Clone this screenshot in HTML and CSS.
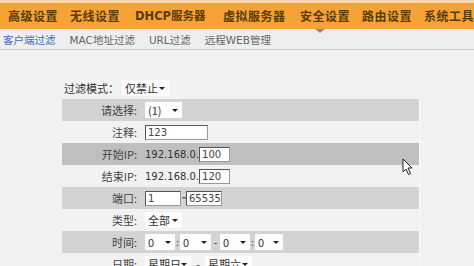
FILE: index.html
```html
<!DOCTYPE html>
<html lang="zh">
<head>
<meta charset="utf-8">
<link rel="stylesheet" href="styles.css">
</head>
<body>
<div class="topline"></div>
<nav class="menu">
  <span class="mi m1">高级设置</span>
  <span class="mi m2">无线设置</span>
  <span class="mi m3">DHCP服务器</span>
  <span class="mi m4">虚拟服务器</span>
  <span class="mi m5 active">安全设置</span>
  <span class="mi m6">路由设置</span>
  <span class="mi m7">系统工具</span>
</nav>
<div class="subbar">
  <span class="si cur">客户端过滤</span>
  <span class="si">MAC地址过滤</span>
  <span class="si">URL过滤</span>
  <span class="si">远程WEB管理</span>
</div>
<main class="content">
  <div class="mode">
    <span class="mode-label">过滤模式：</span>
    <span class="sel w47">仅禁止<i class="arr"></i></span>
  </div>
  <div class="table">
    <div class="row g1"><span class="lab">请选择:</span><span class="val"><span class="sel w37">(1)<i class="arr"></i></span></span></div>
    <div class="row"><span class="lab">注释:</span><span class="val"><span class="inp w63">123</span></span></div>
    <div class="row g2"><span class="lab">开始IP:</span><span class="val">192.168.0.<span class="inp w31">100</span></span></div>
    <div class="row"><span class="lab">结束IP:</span><span class="val">192.168.0.<span class="inp w31">120</span></span></div>
    <div class="row g1"><span class="lab">端口:</span><span class="val"><span class="inp w36">1</span><span class="sep">~</span><span class="inp w36">65535</span></span></div>
    <div class="row"><span class="lab">类型:</span><span class="val"><span class="sel w37">全部<i class="arr"></i></span></span></div>
    <div class="row g1"><span class="lab">时间:</span><span class="val"><span class="sel w30">0<i class="arr"></i></span><span class="sep">:</span><span class="sel w31">0<i class="arr"></i></span><span class="sep dash">-</span><span class="sel w30">0<i class="arr"></i></span><span class="sep">:</span><span class="sel w28">0<i class="arr"></i></span></span></div>
    <div class="row"><span class="lab">日期:</span><span class="val"><span class="sel w46">星期日<i class="arr"></i></span><span class="sep dash2">-</span><span class="sel w47">星期六<i class="arr"></i></span></span></div>
  </div>
</main>
<svg class="cursor" width="12" height="18" viewBox="0 0 12 18"><path d="M1 1 L1 14 L4 11 L6.5 16.5 L8.5 15.5 L6 10 L10 10 Z" fill="#fff" stroke="#222" stroke-width="1"/></svg>
</body>
</html>
```
FILE: styles.css
```css
html, body {
  margin: 0;
  padding: 0;
}
body {
  width: 474px;
  height: 266px;
  overflow: hidden;
  background: #f2f2f2;
  font-family: "Noto Sans CJK SC", "DejaVu Sans", sans-serif;
  color: #333;
  position: relative;
}
.topline {
  height: 3px;
  background: #fbd9a8;
}
.menu {
  height: 26px;
  background: #f7a237;
  white-space: nowrap;
  font-size: 12px;
  font-weight: bold;
  color: #5a3c08;
  position: relative;
}
.mi { position: absolute; top: 3px; line-height: 20px; letter-spacing: 0.5px; }
.m1 { left: 8px; }
.m2 { left: 70px; }
.m3 { left: 135px; font-family: "DejaVu Sans", "Noto Sans CJK SC", sans-serif; font-size: 11.5px; letter-spacing: 0; }
.m4 { left: 223px; }
.m5 { left: 300px; }
.m6 { left: 362px; }
.m7 { left: 424px; }
.active::after {
  content: "";
  position: absolute;
  left: 15px;
  top: 23px;
  border-left: 5px solid transparent;
  border-right: 5px solid transparent;
  border-top: 4px solid #8a8a8a;
}
.subbar {
  height: 20px;
  background: #eeeeee;
  border-bottom: 1px solid #d0d0d0;
  display: flex;
  align-items: center;
  gap: 14px;
  padding-left: 3px;
  color: #666;
  white-space: nowrap;
}
.si { font-family: "DejaVu Sans", "Noto Sans CJK SC", sans-serif; font-size: 10.5px; }
.si.cur { color: #3d6eb4; }
.content {
  padding: 29px 0 0 62px;
  font-size: 11px;
}
.mode {
  display: flex;
  align-items: center;
  height: 18px;
  padding-left: 2px;
  margin-bottom: 2px;
}
.mode-label { margin-right: 3px; }
.table {
  width: 358px;
  display: flex;
  flex-direction: column;
}
.row {
  height: 22px;
  display: flex;
  align-items: center;
  white-space: nowrap;
  border-right: 1px solid #fafafa;
}
.row.g1 { background: #d3d3d3; }
.row.g2 { background: #bfbfbf; }
.lab {
  width: 75px;
  text-align: right;
  margin-right: 8px;
  color: #444;
}
.val {
  display: flex;
  align-items: center;
  font-family: "DejaVu Sans", "Noto Sans CJK SC", sans-serif;
  font-size: 10px;
  color: #333;
}
.sel {
  display: inline-flex;
  align-items: center;
  justify-content: space-between;
  height: 16px;
  padding: 0 4px 0 3px;
  box-sizing: border-box;
  background: #fdfdfd;
  font-family: "Noto Sans CJK SC", "DejaVu Sans", sans-serif;
  font-size: 11px;
}
.arr {
  width: 0; height: 0;
  border-left: 3px solid transparent;
  border-right: 3px solid transparent;
  border-top: 3px solid #222;
}
.inp {
  display: inline-flex;
  align-items: center;
  height: 15px;
  box-sizing: border-box;
  border: 1px solid #555;
  border-right-color: #999;
  border-bottom-color: #999;
  background: #fff;
  padding-left: 2px;
  font-size: 10px;
  color: #444;
}
.w28 { width: 28px; }
.w30 { width: 30px; }
.w31 { width: 31px; }
.w36 { width: 36px; }
.w37 { width: 37px; }
.w46 { width: 46px; }
.w47 { width: 47px; }
.w63 { width: 63px; }
.sep { width: 5px; text-align: center; color: #444; }
.sep.dash { width: 9px; }
.sep.dash2 { width: 14px; }
.cursor {
  position: absolute;
  left: 402px;
  top: 158px;
}
```
